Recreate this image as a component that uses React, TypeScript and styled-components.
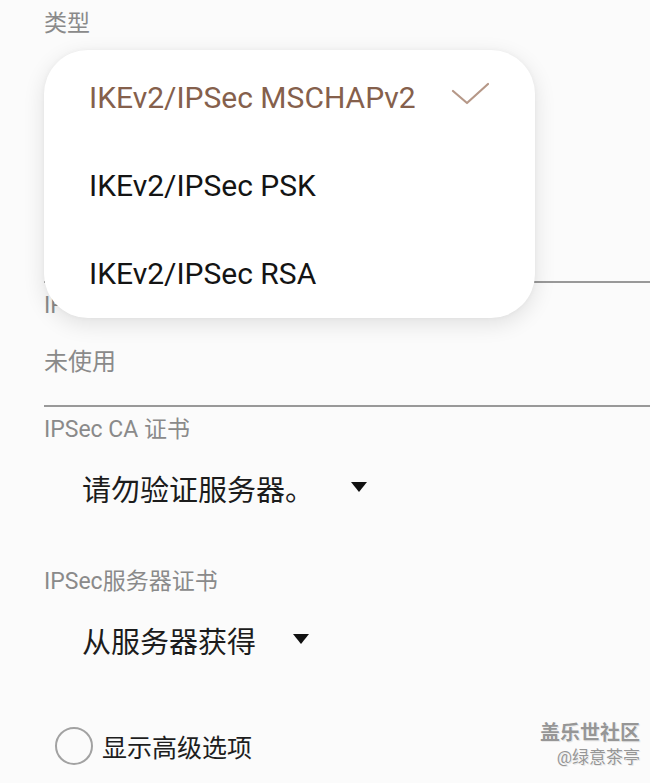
import React from "react";
import styled, { createGlobalStyle } from "styled-components";

const GlobalStyle = createGlobalStyle`
  html, body {
    margin: 0;
    padding: 0;
    background: #fbfbfb;
  }
  body {
    font-family: "Roboto", "Noto Sans CJK SC", sans-serif;
    -webkit-font-smoothing: antialiased;
  }
`;

const Page = styled.div`
  position: relative;
  width: 650px;
  height: 783px;
  overflow: hidden;
  background: #fbfbfb;
`;

const Form = styled.div`
  display: flex;
  flex-direction: column;
  padding-left: 44px;
`;

const Label = styled.div<{ $h?: number }>`
  height: ${(p) => p.$h ?? 46}px;
  display: flex;
  align-items: center;
  font-size: 23px;
  line-height: 28px;
  color: #8a8a8a;
  white-space: nowrap;
`;

// the part of the form that sits under the open menu
const Covered = styled.div<{ $h: number }>`
  height: ${(p) => p.$h}px;
`;

const TextValue = styled.div<{ $placeholder?: boolean }>`
  height: 34px;
  padding: 16px 0 26px;
  line-height: 34px;
  font-size: 24px;
  color: ${(p) => (p.$placeholder ? "#8a8a8a" : "#1e1e1e")};
  border-bottom: 2px solid #999;
`;

const SelectValue = styled.div`
  height: 106px;
  box-sizing: border-box;
  padding: 21px 0 0 38px;
  display: flex;
  align-items: flex-start;
  line-height: 34px;
  font-size: 29px;
  color: #1c1c1c;
`;

const Caret = styled.span`
  width: 0;
  height: 0;
  margin: 8px 0 0 37px;
  border-left: 8px solid transparent;
  border-right: 8px solid transparent;
  border-top: 10px solid #111;
`;

const CheckRow = styled.label`
  height: 70px;
  display: flex;
  align-items: center;
  gap: 9px;
  padding-left: 11px;
  font-size: 25px;
  color: #1e1e1e;
`;

const Radio = styled.span`
  width: 34px;
  height: 34px;
  border-radius: 50%;
  border: 2px solid #a2a2a2;
  box-sizing: content-box;
`;

const Menu = styled.div`
  position: absolute;
  left: 44px;
  top: 50px;
  width: 491px;
  height: 268px;
  box-sizing: border-box;
  padding-top: 3px;
  border-radius: 44px;
  background: #ffffff;
  box-shadow: 0 6px 22px rgba(0, 0, 0, 0.11), 0 0 5px rgba(0, 0, 0, 0.04);
  display: flex;
  flex-direction: column;
`;

const MenuItem = styled.div<{ $selected?: boolean }>`
  height: 88px;
  display: flex;
  align-items: center;
  justify-content: space-between;
  padding: 0 46px 0 45px;
  font-size: 30px;
  color: ${(p) => (p.$selected ? "#85604c" : "#141414")};
  white-space: nowrap;
`;

const Check = styled.svg`
  width: 40px;
  height: 24px;
  margin-bottom: 6px;
`;

const Watermark = styled.div`
  position: absolute;
  right: 10px;
  bottom: 15px;
  display: flex;
  flex-direction: column;
  align-items: flex-end;
  color: #969696;
  font-weight: 700;
  text-shadow: 0 0 1px #fff, 1px 1px 0 #e6e6e6;
  line-height: 26px;
`;

const MarkTitle = styled.span`
  font-size: 20px;
`;

const MarkUser = styled.span`
  font-size: 17px;
  font-weight: 400;
  line-height: 22px;
`;

const options = ["IKEv2/IPSec MSCHAPv2", "IKEv2/IPSec PSK", "IKEv2/IPSec RSA"];

export default function App() {
  const selected = 0;
  return (
    <Page>
      <GlobalStyle />
      <Form>
        <Label $h={48}>类型</Label>
        {/* type value + server address field, hidden by the menu */}
        <Covered $h={157} />
        <TextValue />

        <Label>IPSec 标识符</Label>
        <TextValue $placeholder>未使用</TextValue>

        <Label>IPSec CA 证书</Label>
        <SelectValue>
          请勿验证服务器。
          <Caret />
        </SelectValue>

        <Label>IPSec服务器证书</Label>
        <SelectValue>
          从服务器获得
          <Caret />
        </SelectValue>

        <CheckRow>
          <Radio />
          显示高级选项
        </CheckRow>
      </Form>

      <Menu>
        {options.map((o, i) => (
          <MenuItem key={o} $selected={i === selected}>
            {o}
            {i === selected && (
              <Check viewBox="0 0 40 24">
                <polyline
                  points="4,9 18,21 39,2"
                  fill="none"
                  stroke="#b69888"
                  strokeWidth="2.2"
                  strokeLinecap="round"
                  strokeLinejoin="round"
                />
              </Check>
            )}
          </MenuItem>
        ))}
      </Menu>

      <Watermark>
        <MarkTitle>盖乐世社区</MarkTitle>
        <MarkUser>@绿意茶亭</MarkUser>
      </Watermark>
    </Page>
  );
}
